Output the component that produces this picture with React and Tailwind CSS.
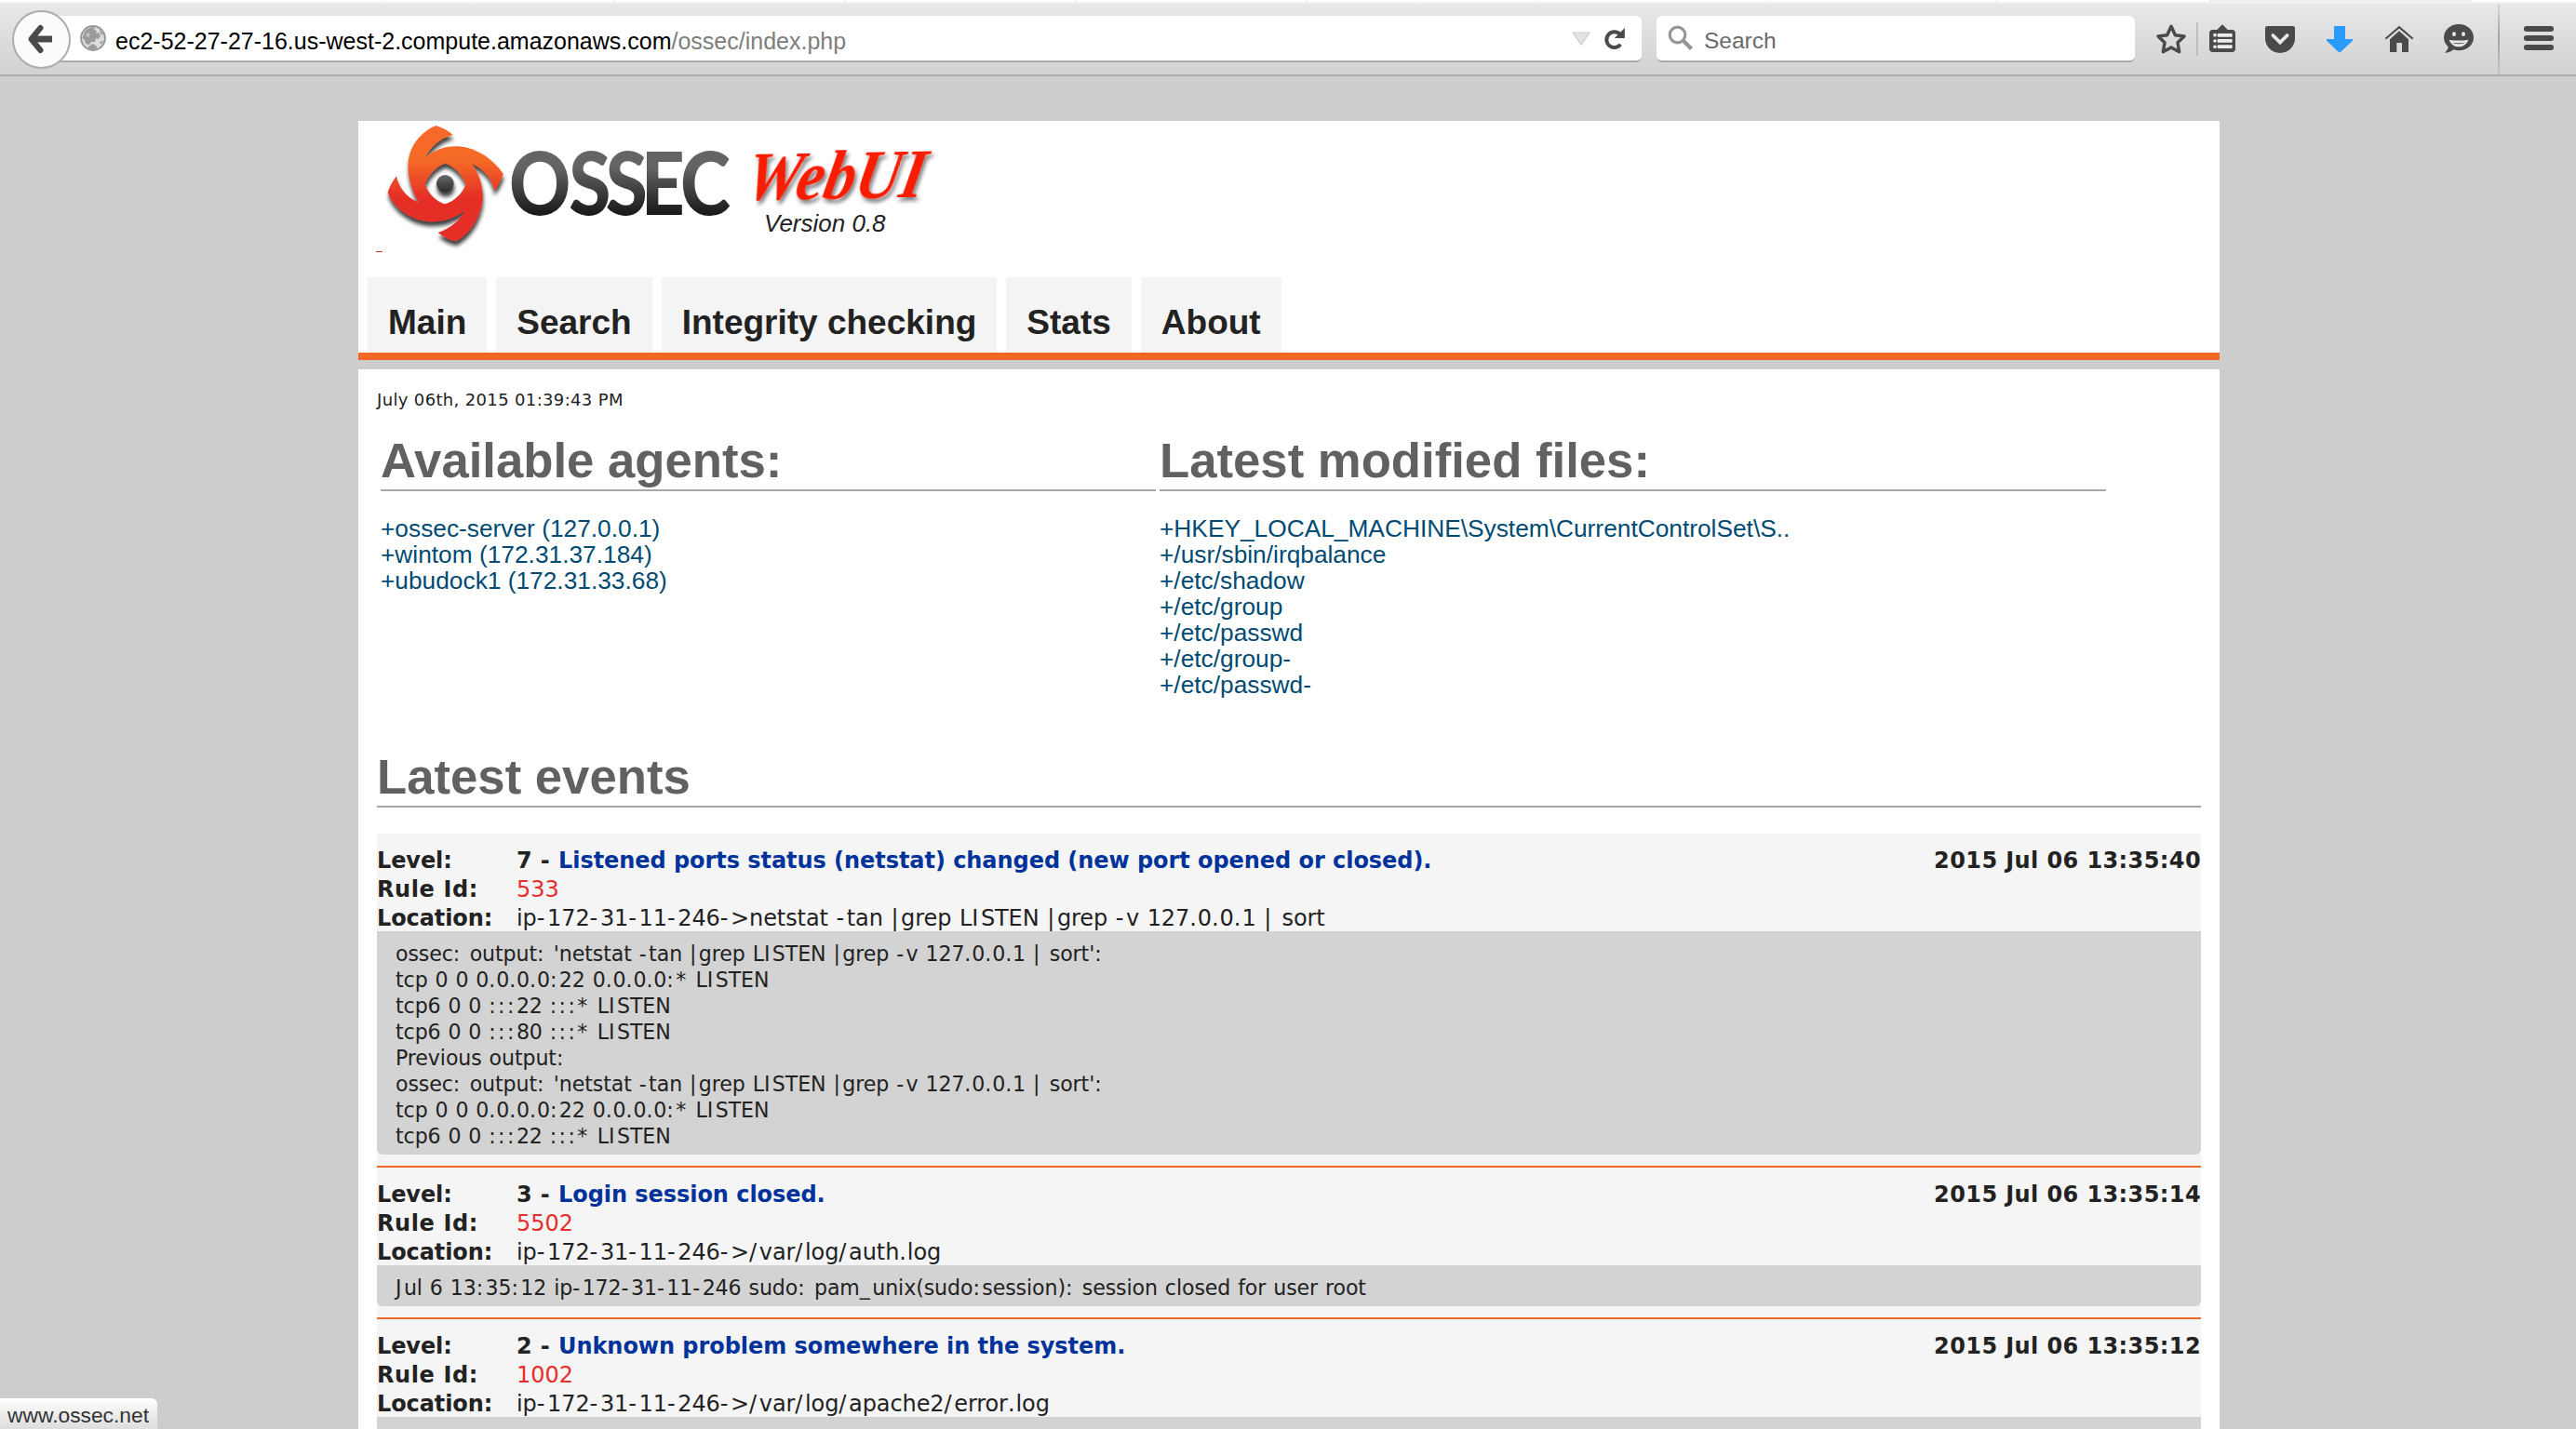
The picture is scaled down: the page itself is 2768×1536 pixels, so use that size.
import React from "react";

/* ---------- text helper: widens punctuation the way Verdana does ---------- */

function Verdana({ children }) {
  const runs = children.match(/[-|:/_*IJ]+|[., ]+|[^-|:/_*IJ., ]+/g);
  return runs.map((run, i) => {
    if (/^[-|:/_*IJ]/.test(run)) return <span key={i} className="tracking-[0.11em]">{run}</span>;
    if (/^[., ]/.test(run)) return <span key={i} className="tracking-[0.04em]">{run}</span>;
    return <span key={i} className="tracking-[-0.004em]">{run}</span>;
  });
}

/* ---------- browser toolbar ---------- */

function BackIcon() {
  return (
    <svg viewBox="0 0 30 34" className="h-[34px] w-[30px]" fill="none" stroke="#4a4a4a" strokeWidth="7" strokeLinecap="round" strokeLinejoin="round">
      <path d="M15.500 5 L5.500 17 L15.500 29" strokeWidth="6" />
      <path d="M8 17 H28" strokeWidth="7" strokeLinecap="butt" />
    </svg>
  );
}

function GlobeIcon() {
  return (
    <svg viewBox="0 0 28 28" className="h-7 w-7">
      <circle cx="14" cy="14" r="12.900" fill="#dcdcdc" stroke="#969696" strokeWidth="2" />
      <path d="M5 7 C8 3 13 1.500 16 2.500 L15 5 L18 6 L17 9 L20 8 L22 12 L19 15 L17 14 L16 18 L12 18 L10 21 L6 20 L5 16 L2.500 14 Z" fill="#9b9b9b" />
      <path d="M9 23 L14 20 L17 22 L19 26 C15 27.500 11 26.500 9 25 Z M20 4 L25 9 L23 11 Z M21 18 L25 17 L23 21 Z" fill="#9b9b9b" />
      <path d="M6 10 L9 8 L11 10 L9 13 L7 12 Z" fill="#c4c4c4" />
    </svg>
  );
}

function ReloadIcon() {
  return (
    <svg viewBox="0 0 24 24" className="h-6 w-6">
      <path d="M17.800 6.800 A8.400 8.400 0 1 0 18.300 17.800" fill="none" stroke="#4a4a4a" strokeWidth="4" />
      <path d="M22.800 0 V11 H11.800 Z" fill="#4a4a4a" />
    </svg>
  );
}

function MagnifierIcon() {
  return (
    <svg viewBox="0 0 28 28" className="h-7 w-7" fill="none" stroke="#979797">
      <circle cx="10.500" cy="10.500" r="8.300" strokeWidth="3.200" />
      <path d="M16.800 16.800 L25.500 25.500" strokeWidth="4.400" />
    </svg>
  );
}

function StarIcon() {
  return (
    <svg viewBox="48 42 102 108" className="ml-[22px] h-9 w-[34px] shrink-0">
      <path d="M99 55 L112 83 L141 87 L120 107 L125 137 L99 123 L73 137 L78 107 L57 87 L86 83 Z" fill="none" stroke="#4a4a4a" strokeWidth="10.500" strokeLinejoin="round" />
    </svg>
  );
}

function ReadingListIcon() {
  return (
    <svg viewBox="219 42 90 108" className="ml-[11px] h-9 w-[30px] shrink-0">
      <path d="M264 49 L282 67 H246 Z" fill="#4a4a4a" />
      <rect x="222" y="66" width="84" height="72" rx="11" fill="#4a4a4a" />
      <g fill="#ededed">
        <circle cx="240" cy="83" r="5.500" />
        <circle cx="240" cy="102" r="5.500" />
        <circle cx="240" cy="121" r="5.500" />
        <rect x="248" y="78" width="48" height="11" rx="2" />
        <rect x="248" y="96" width="48" height="11" rx="2" />
        <rect x="248" y="115" width="48" height="11" rx="2" />
      </g>
    </svg>
  );
}

function PocketIcon() {
  return (
    <svg viewBox="399 42 102 108" className="ml-[30px] h-9 w-[34px] shrink-0">
      <path d="M409 54 H491 Q498 54 498 61 V94 C498 120 477 141 450 141 C423 141 402 120 402 94 V61 Q402 54 409 54 Z" fill="#4a4a4a" />
      <path d="M427 84 L450 107 L473 84" fill="none" stroke="#e8e8e8" strokeWidth="11" strokeLinecap="round" strokeLinejoin="miter" />
    </svg>
  );
}

function DownloadIcon() {
  return (
    <svg viewBox="597 42 90 108" className="ml-8 h-9 w-[30px] shrink-0">
      <path d="M628 54 H656 Q660 54 660 58 V96 H684 V101 L646 137 Q642 140 638 137 L600 101 V96 H624 V58 Q624 54 628 54 Z" fill="#2c9bff" />
    </svg>
  );
}

function HomeIcon() {
  return (
    <svg viewBox="786 42 96 108" className="ml-[33px] h-9 w-8 shrink-0">
      <path d="M790 95 L834 57.500 L878 95" fill="none" stroke="#4a4a4a" strokeWidth="6" />
      <path d="M834 70 L864 97 V138 H843 V108 H826 V138 H804 V97 Z" fill="#4a4a4a" />
    </svg>
  );
}

function SmileIcon() {
  return (
    <svg viewBox="975 42 102 108" className="ml-[31px] h-9 w-[34px] shrink-0">
      <path d="M1026 48 C1053 48 1074 67 1074 91 C1074 115 1053 133 1026 133 C1020 133 1014 132 1009 130 C1002 137 993 140 981 140 C988 134 992 127 992 121 C983 113 978 103 978 91 C978 67 999 48 1026 48 Z" fill="#4a4a4a" />
      <ellipse cx="1011" cy="80" rx="6" ry="7" fill="#e8e8e8" />
      <ellipse cx="1041" cy="80" rx="6" ry="7" fill="#e8e8e8" />
      <path d="M995 98 Q1026 103 1057 98 C1052 112 1040 121 1026 121 C1012 121 1000 112 995 98 Z" fill="#e8e8e8" />
      <path d="M1005 107 Q1026 110 1047 107 Q1039 112 1026 112 Q1013 112 1005 107 Z" fill="#4a4a4a" />
    </svg>
  );
}

function MenuIcon() {
  return (
    <svg viewBox="1233 42 102 108" className="ml-[25px] h-9 w-[34px] shrink-0" fill="#4a4a4a">
      <rect x="1236" y="54" width="96" height="18" rx="8" />
      <rect x="1236" y="84" width="96" height="18" rx="8" />
      <rect x="1236" y="114" width="96" height="18" rx="8" />
    </svg>
  );
}

function BrowserToolbar() {
  return (
    <header className="flex h-[82px] flex-col border-b-2 border-[#acacac] bg-white font-['Liberation_Sans',sans-serif]">
      <div className="flex h-[2px] shrink-0 pl-[166px]">
        {[0, 1, 2, 3, 4, 5, 6, 7].map((tab) => (
          <div key={tab} className="w-[247.5px] border-r border-[#e6e6e6]" />
        ))}
        <div className="ml-[228px] w-[282px] bg-[#efefef]" />
      </div>
      <div className="h-[2px] shrink-0 bg-[#f1f1f1]" />
      <div className="flex grow items-center bg-linear-to-b from-[#e8e8e8] to-[#d2d2d2]">
        <div className="z-10 ml-[13px] flex size-[63px] shrink-0 items-center justify-center rounded-full border-2 border-[#adadad] bg-[#fbfbfb]">
          <div className="-ml-1"><BackIcon /></div>
        </div>
        <div className="-ml-5 flex h-[50px] w-[1708px] shrink-0 items-center rounded-r-md border-b-2 border-[#a9a9a9] bg-white pl-[30px] pr-[17px]">
          <GlobeIcon />
          <p className="ml-[10px] grow pt-[5px] text-[25px] leading-7 whitespace-pre text-black">
            ec2-52-27-27-16.us-west-2.compute.amazonaws.com<span className="text-[#7d7d7d]">/ossec/index.php</span>
          </p>
          <svg viewBox="0 0 20 15" className="mr-[14px] h-[15px] w-5">
            <path d="M1 1 H19 L10 14 Z" fill="#e4e4e4" stroke="#c9c9c9" strokeWidth="1.200" />
          </svg>
          <div className="pt-[2px]"><ReloadIcon /></div>
        </div>
        <div className="ml-4 flex h-[50px] w-[514px] shrink-0 items-center rounded-md border-b-2 border-[#a9a9a9] bg-white pl-3">
          <MagnifierIcon />
          <span className="ml-[11px] pt-[5px] text-[24.5px] leading-7 text-[#6b6b6b]">Search</span>
        </div>
        <StarIcon />
        <div className="ml-[10px] h-9 w-[2px] shrink-0 bg-[#bdbdbd]" />
        <ReadingListIcon />
        <PocketIcon />
        <DownloadIcon />
        <HomeIcon />
        <SmileIcon />
        <div className="ml-[25px] h-full w-[2px] shrink-0 bg-linear-to-b from-[#d5d8da] via-[#9aa3ab] to-[#c3c7ca]" />
        <MenuIcon />
      </div>
    </header>
  );
}

/* ---------- site header ---------- */

function OssecLogo() {
  return (
    <svg viewBox="400 130 640 142" className="h-[142px] w-[640px]">
      <defs>
        <linearGradient id="emblem" x1="0" y1="30" x2="0" y2="403" gradientUnits="userSpaceOnUse">
          <stop offset="0" stopColor="#f8682a" />
          <stop offset="0.300" stopColor="#f56b27" />
          <stop offset="0.620" stopColor="#e42f27" />
          <stop offset="1" stopColor="#e42d27" />
        </linearGradient>
        <linearGradient id="pupil" x1="0" y1="189" x2="0" y2="245" gradientUnits="userSpaceOnUse">
          <stop offset="0" stopColor="#6a6a6c" />
          <stop offset="1" stopColor="#2a2a2a" />
        </linearGradient>
        <linearGradient id="wordmark" x1="0" y1="162" x2="0" y2="232" gradientUnits="userSpaceOnUse">
          <stop offset="0.250" stopColor="#646466" />
          <stop offset="1" stopColor="#171717" />
        </linearGradient>
        <filter id="emblemShadow" x="-20%" y="-20%" width="140%" height="150%">
          <feDropShadow dx="2" dy="15" stdDeviation="7" floodColor="#000" floodOpacity="0.750" />
        </filter>
        <filter id="scriptShadow" x="-20%" y="-20%" width="140%" height="150%">
          <feDropShadow dx="3" dy="4" stdDeviation="2" floodColor="#000" floodOpacity="0.500" />
        </filter>
      </defs>
      <g transform="translate(400 125) scale(0.33333)" filter="url(#emblemShadow)">
        <path
          fill="url(#emblem)"
          fillRule="evenodd"
          d="M205 30 Q235 38 260 60 C215 72 188 98 170 135 C225 80 345 75 422 185 C415 208 405 225 392 240 C388 205 365 172 320 152 C350 190 360 240 355 275 C345 340 305 385 270 403 Q238 397 212 375 C250 362 282 338 300 303 C240 350 160 350 110 315 C80 297 60 272 50 245 C57 225 66 208 78 193 C85 230 110 262 150 278 C120 225 108 170 120 125 C130 85 165 45 205 30 Z M235 152 C265 160 292 190 302 220 C290 250 262 276 235 283 C208 276 180 250 170 218 C182 188 208 160 235 152 Z"
        />
        <circle cx="235" cy="217" r="28" fill="url(#pupil)" />
      </g>
      <text
        transform="translate(547 0) scale(0.88 1)"
        x="0 73 118 161 209"
        y="231.500"
        className="font-['Lato',sans-serif] text-[93px] font-black"
        fill="url(#wordmark)"
      >
        OSSEC
      </text>
      <text
        transform="translate(798 215) rotate(-1) skewX(-12)"
        textLength="192"
        lengthAdjust="spacingAndGlyphs"
        className="font-['Liberation_Serif',serif] text-[75px] font-bold italic"
        fill="#f81d04"
        filter="url(#scriptShadow)"
      >
        WebUI
      </text>
      <rect x="404" y="270" width="7" height="1" fill="#e42d27" />
    </svg>
  );
}

const TABS = ["Main", "Search", "Integrity checking", "Stats", "About"];

function SiteHeader() {
  return (
    <div className="flex h-[257px] flex-col border-b-8 border-[#f26726] bg-white">
      <div className="relative h-[168px] pl-[15px]">
        <OssecLogo />
        <em className="absolute top-[95px] left-[436px] text-[26px] leading-[30px] text-[#222]">Version 0.8</em>
      </div>
      <nav className="flex gap-[10px] pl-[10px]">
        {TABS.map((tab) => (
          <a key={tab} className="h-[81px] bg-[#f4f4f4] px-[22px] pt-[28px] text-[37px] leading-[42px] font-bold">
            {tab}
          </a>
        ))}
      </nav>
    </div>
  );
}

/* ---------- page content ---------- */

const AGENTS = ["+ossec-server (127.0.0.1)", "+wintom (172.31.37.184)", "+ubudock1 (172.31.33.68)"];

const FILES = [
  "+HKEY_LOCAL_MACHINE\\System\\CurrentControlSet\\S..",
  "+/usr/sbin/irqbalance",
  "+/etc/shadow",
  "+/etc/group",
  "+/etc/passwd",
  "+/etc/group-",
  "+/etc/passwd-",
];

const EVENTS = [
  {
    level: "7",
    title: "Listened ports status (netstat) changed (new port opened or closed).",
    date: "2015 Jul 06 13:35:40",
    rule: "533",
    location: "ip-172-31-11-246->netstat -tan |grep LISTEN |grep -v 127.0.0.1 | sort",
    dump: [
      "ossec: output: 'netstat -tan |grep LISTEN |grep -v 127.0.0.1 | sort':",
      "tcp 0 0 0.0.0.0:22 0.0.0.0:* LISTEN",
      "tcp6 0 0 :::22 :::* LISTEN",
      "tcp6 0 0 :::80 :::* LISTEN",
      "Previous output:",
      "ossec: output: 'netstat -tan |grep LISTEN |grep -v 127.0.0.1 | sort':",
      "tcp 0 0 0.0.0.0:22 0.0.0.0:* LISTEN",
      "tcp6 0 0 :::22 :::* LISTEN",
    ],
  },
  {
    level: "3",
    title: "Login session closed.",
    date: "2015 Jul 06 13:35:14",
    rule: "5502",
    location: "ip-172-31-11-246->/var/log/auth.log",
    dump: ["Jul 6 13:35:12 ip-172-31-11-246 sudo: pam_unix(sudo:session): session closed for user root"],
  },
  {
    level: "2",
    title: "Unknown problem somewhere in the system.",
    date: "2015 Jul 06 13:35:12",
    rule: "1002",
    location: "ip-172-31-11-246->/var/log/apache2/error.log",
    dump: [],
  },
];

function Heading({ children }) {
  return (
    <h2 className="h-[63px] border-b-2 border-[#a7a7ab] text-[52.7px] leading-[59px] font-bold text-[#616161]">{children}</h2>
  );
}

function LinkList({ title, items, className }) {
  return (
    <section className={className}>
      <Heading>{title}</Heading>
      <ul className="mt-[26px] text-[26.3px] leading-7 text-[#004a73]">
        {items.map((item) => (
          <li key={item} className="whitespace-nowrap">{item}</li>
        ))}
      </ul>
    </section>
  );
}

function EventRow({ label, children, wide }) {
  return (
    <div className="flex">
      <span className={wide ? "w-[150px] shrink-0 font-bold tracking-[0.6px]" : "w-[150px] shrink-0 font-bold tracking-[-0.1px]"}>{label}</span>
      <div className="flex grow whitespace-pre">{children}</div>
    </div>
  );
}

function Event({ event }) {
  return (
    <article className="border-b-2 border-[#f26726] bg-[#f5f5f5] pb-3">
      <div className="h-[105px] pt-[14px] text-[24px] leading-[31px]">
        <EventRow label="Level:">
          <span className="font-bold tracking-[0.4px]">{event.level} - </span>
          <span className="grow font-bold tracking-[-0.05px] text-[#00329b]">{event.title}</span>
          <span className="font-bold tracking-[0.4px]">{event.date}</span>
        </EventRow>
        <EventRow label="Rule Id:" wide>
          <span className="text-[#e62e2b]">{event.rule}</span>
        </EventRow>
        <EventRow label="Location:">
          <span><Verdana>{event.location}</Verdana></span>
        </EventRow>
      </div>
      <div className="relative rounded-b-md bg-[#d3d3d3] pt-[10px] pb-[6px] pl-5 text-[22.1px] leading-7">
        {event.dump.map((line, i) => (
          <p key={i} className="whitespace-pre"><Verdana>{line}</Verdana></p>
        ))}
      </div>
    </article>
  );
}

export default function App() {
  return (
    <div className="relative h-[1536px] w-[2768px] overflow-hidden bg-[#cdcdcd] font-['Liberation_Sans',sans-serif] text-[#222]">
      <BrowserToolbar />
      <div className="mt-12 ml-[385px] w-[2000px]">
        <SiteHeader />
        <main className="mt-[10px] h-[1200px] bg-white px-5 pt-[23px]">
          <p className="font-['DejaVu_Sans',sans-serif] text-[18px] leading-5 tracking-[0.35px]">July 06th, 2015 01:39:43 PM</p>
          <div className="mt-[25px] ml-1 flex gap-1">
            <LinkList title="Available agents:" items={AGENTS} className="w-[833px]" />
            <LinkList title="Latest modified files:" items={FILES} className="w-[1017px]" />
          </div>
          <div className="mt-[55px]">
            <Heading>Latest events</Heading>
          </div>
          <div className="mt-7 font-['DejaVu_Sans',sans-serif]">
            {EVENTS.map((event) => (
              <Event key={event.rule} event={event} />
            ))}
          </div>
        </main>
      </div>
      <div className="absolute bottom-0 left-0 flex h-[33px] w-[169px] items-center rounded-tr-md bg-linear-to-b from-white to-[#dddddd] pl-2 pt-[2px] text-[22.8px] leading-7 text-[#333]">
        www.ossec.net
      </div>
    </div>
  );
}
